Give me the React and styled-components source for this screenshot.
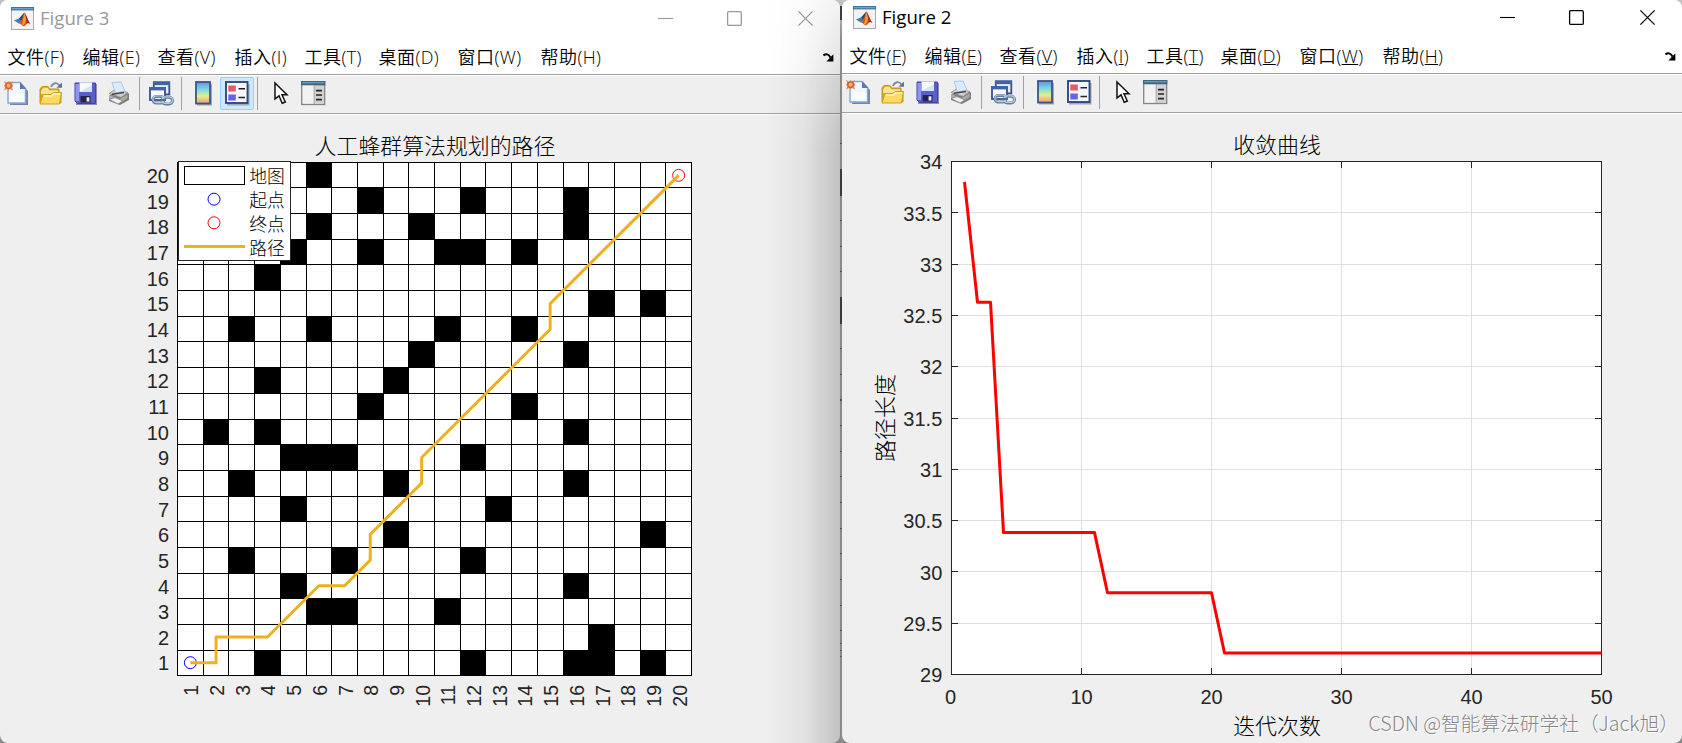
import styled, { createGlobalStyle, css } from "styled-components"

const menus = [
    ["文件", "F"],
    ["编辑", "E"],
    ["查看", "V"],
    ["插入", "I"],
    ["工具", "T"],
    ["桌面", "D"],
    ["窗口", "W"],
    ["帮助", "H"],
]

// obstacle columns for every row of the map
const obstacles = {
    20: [6],
    19: [8, 12, 16],
    18: [6, 10, 16],
    17: [5, 8, 11, 12, 14],
    16: [4],
    15: [17, 19],
    14: [3, 6, 11, 14],
    13: [10, 16],
    12: [4, 9],
    11: [8, 14],
    10: [2, 4, 16],
    9: [5, 6, 7, 12],
    8: [3, 9, 16],
    7: [5, 13],
    6: [9, 19],
    5: [3, 7, 12],
    4: [5, 16],
    3: [6, 7, 11],
    2: [17],
    1: [4, 12, 16, 17, 19],
}

const route = [
    [1, 1], [2, 1], [2, 2], [4, 2], [6, 4], [7, 4], [8, 5],
    [8, 6], [10, 8], [10, 9], [15, 14], [15, 15], [20, 20],
]

const convergence = [
    [1, 33.8], [2, 32.628], [3, 32.628], [4, 30.383], [11, 30.383],
    [12, 29.797], [20, 29.797], [21, 29.21], [50, 29.21],
]

const MatlabIcon = () => (
    <svg width="23" height="23" viewBox="0 0 23 23">
        <rect x="0.5" y="0.5" width="22" height="22" fill="#f3f3f3" stroke="#a9a9a9" />
        <rect x="0" y="0" width="23" height="3.4" fill="#3f7398" />
        <rect x="1" y="1.2" width="21" height="1" fill="#7fb0cf" />
        <path d="M3 13.5 L8.3 11.2 L13.5 5.6 L11 14 L7.8 16.6 Z" fill="#3a7fb4" />
        <path d="M8.3 11.2 L13.5 5.6 L11.5 12.5 L9.5 13.5 Z" fill="#234f78" />
        <path d="M7.8 16.6 C10 15.5 11.5 10 13.5 5.4 C15.5 8 17 14 19.5 17 C17.5 15.6 16.5 15.8 14.8 18 C13.6 19.5 12 19.6 11.2 18.8 C10.3 17.8 9.6 16.8 7.8 16.6 Z" fill="#d8541c" />
        <path d="M13.5 5.4 C12.9 8 12.2 14 11 18.6 C13 19 14 16 15 13 C14.6 10 14.2 7 13.5 5.4 Z" fill="#f2a035" />
        <path d="M13.5 5.4 C15.5 8 17 14 19.5 17 C17.5 15.6 16.5 15.8 15.5 17 C15.6 13 14.7 8 13.5 5.4 Z" fill="#a82a17" />
    </svg>
)

const NewIcon = () => (
    <svg width="25" height="25" viewBox="0 0 25 25">
        <path d="M6 4 H18 L24 10 V24 H6 Z" fill="#7385ab" />
        <path d="M4 1.5 H16 L21.5 7.5 V22 H4 Z" fill="#f0f8ff" stroke="#86a6dc" strokeWidth="1.4" />
        <path d="M16 1 L22.3 8 H16 Z" fill="#5f78b4" />
        <path d="M6 12 H20 V21 H6 Z" fill="#fff" opacity="0.6" />
        <path d="M0 0 L3 1.5 L4.5 0 L6 1.5 L9 0 L8 3 L9.5 4.7 L8 6.2 L9 9.5 L6 8 L4.5 9.5 L3 8 L0 9.5 L1.2 6.2 L0 4.7 L1.2 3 Z" fill="#e08a66" />
        <circle cx="4.6" cy="4.7" r="2.7" fill="#f4b25c" stroke="#cf5433" strokeWidth="1.2" />
    </svg>
)

const OpenIcon = () => (
    <svg width="24" height="25" viewBox="0 0 24 25">
        <path d="M12 6 C14 1.5 18 1 20.5 4.5" fill="none" stroke="#7a8fa5" strokeWidth="1.8" />
        <path d="M17.5 6.8 H23 V1.5 Z" fill="#5d7590" />
        <path d="M1 22 V8 L3 5.5 H9 L11 8 H20 V12 H22 V22 Z" fill="#d7a520" stroke="#c2951c" />
        <path d="M2 10 L4 6.8 H8.5 L10.5 9.2 H19 V13 H2 Z" fill="#fbe58a" />
        <path d="M1 23 L4 13.5 H12 L14 11.5 H22.5 L20.5 23 Z" fill="#fbdc60" stroke="#cda024" />
        <path d="M5 15 H12.5 L14.5 13 H21" fill="none" stroke="#fff6c4" strokeWidth="1.4" />
    </svg>
)

const SaveIcon = () => (
    <svg width="24" height="25" viewBox="0 0 24 25">
        <rect x="2" y="3" width="21" height="21" fill="#8f8fb5" />
        <path d="M1 2 H21.5 V22.5 H3.5 L1 20 Z" fill="#5a5fc8" stroke="#4144a6" />
        <path d="M1.5 3 H5 V20 H1.5 Z" fill="#8f95ea" />
        <rect x="5.5" y="1.5" width="12.5" height="9.5" fill="#f4faff" />
        <path d="M5.5 11 L18 4 V11 Z" fill="#d3e3f6" />
        <rect x="6.5" y="15" width="10" height="6.5" fill="#222748" />
        <rect x="12.6" y="16.3" width="2.8" height="4.2" fill="#eef" />
    </svg>
)

const PrintIcon = () => (
    <svg width="24" height="25" viewBox="0 0 24 25">
        <path d="M3 14 L10 9.5 L22 12.5 V19 L13 24 L2 20 Z" fill="#7c7c7c" />
        <path d="M2 12.5 L8 8.5 L21 11.5 L14 16.5 Z" fill="#cdcdcd" stroke="#8a8a8a" strokeWidth="0.8" />
        <path d="M5 1.5 L14 1 L18 10 L8.5 12 Z" fill="#d9ecff" stroke="#a7c1e0" strokeWidth="0.9" />
        <path d="M5 13.3 L17 11.5" stroke="#484848" strokeWidth="1.5" />
        <path d="M2 14 L13 18 L20.5 13.5 V17 L13 22 L2 18 Z" fill="#adadad" />
        <path d="M2 18.5 L8 16.5 L16 20 L11 23 Z" fill="#eee" stroke="#808080" strokeWidth="0.8" />
        <circle cx="18.5" cy="16.5" r="1" fill="#8ec26f" />
    </svg>
)

const LinkIcon = () => (
    <svg width="25" height="25" viewBox="0 0 25 25">
        <rect x="4.8" y="1.4" width="15.5" height="12" fill="#e7edf6" stroke="#345287" strokeWidth="1.8" />
        <rect x="4" y="0.5" width="17" height="3.6" fill="#3f65a4" />
        <rect x="1" y="7" width="15" height="12" fill="#f5f8fc" stroke="#345287" strokeWidth="1.8" />
        <rect x="0.2" y="6" width="16.6" height="3.4" fill="#3f65a4" />
        <rect x="4" y="15.5" width="11" height="6.6" rx="3.3" fill="none" stroke="#637e9e" strokeWidth="3" />
        <rect x="13" y="16.3" width="10.5" height="6.6" rx="3.3" fill="none" stroke="#637e9e" strokeWidth="3" />
        <rect x="4" y="15" width="11" height="6.6" rx="3.3" fill="none" stroke="#b9cce0" strokeWidth="1.2" />
        <rect x="13" y="15.8" width="10.5" height="6.6" rx="3.3" fill="none" stroke="#b9cce0" strokeWidth="1.2" />
        <path d="M10.5 19 H17" stroke="#526d8e" strokeWidth="2" />
    </svg>
)

const ColorbarIcon = () => (
    <svg width="18" height="25" viewBox="0 0 18 25">
        <defs>
            <linearGradient id="bar" x1="0" y1="0" x2="0" y2="1">
                <stop offset="0" stopColor="#6f8fe0" />
                <stop offset="0.35" stopColor="#75dbe0" />
                <stop offset="0.65" stopColor="#e6ec8c" />
                <stop offset="1" stopColor="#ef9c78" />
            </linearGradient>
        </defs>
        <rect x="2" y="3" width="15" height="21.5" fill="#a1a8b5" />
        <rect x="1" y="1" width="14" height="21.5" fill="url(#bar)" stroke="#3d5585" strokeWidth="1.8" />
    </svg>
)

const LegendIcon = () => (
    <svg width="25" height="25" viewBox="0 0 25 25">
        <rect x="2" y="3" width="22.5" height="21.5" fill="#a1a8b5" />
        <rect x="1" y="1" width="21.5" height="21" fill="#f5f7fd" stroke="#32497f" strokeWidth="1.9" />
        <rect x="3.3" y="4.5" width="7.5" height="6" fill="#e65c5c" />
        <rect x="3.3" y="13.5" width="7.5" height="6" fill="#6464e6" />
        <path d="M13.5 7.7 H20 M13.5 16.4 H20" stroke="#222" strokeWidth="1.5" />
    </svg>
)

const PointerIcon = () => (
    <svg width="17" height="25" viewBox="0 0 17 25">
        <path d="M2 2 V18 L6 14.8 L9.2 22.3 L12.3 21 L9 13.8 H14 Z" fill="#fff" stroke="#111" strokeWidth="1.5" />
    </svg>
)

const InspectorIcon = () => (
    <svg width="25" height="25" viewBox="0 0 25 25">
        <rect x="0.7" y="0.7" width="23" height="22.8" fill="#f2f2f2" stroke="#858585" strokeWidth="1.3" />
        <rect x="14" y="4" width="9" height="19" fill="#d1d1d1" />
        <rect x="0" y="0" width="24.3" height="4.3" fill="#3e6681" />
        <rect x="1.2" y="1.2" width="22" height="1.1" fill="#78a9c8" />
        <path d="M13.2 4 V23" stroke="#999" />
        <path d="M15 9.6 H21 M15 14 H21 M15 18.6 H21" stroke="#252525" strokeWidth="1.6" />
    </svg>
)

const WindowButtons = () => (
    <svg width="157" height="17" viewBox="0 0 157 17" fill="none" stroke="currentColor">
        <path d="M0 8.5 H15" strokeWidth="1.1" />
        <rect x="69.6" y="1.7" width="13.7" height="13.7" rx="1.2" strokeWidth="1.3" />
        <path d="M140.4 1.4 L154.6 15.6 M154.6 1.4 L140.4 15.6" strokeWidth="1.2" />
    </svg>
)

const DockArrow = () => (
    <svg width="11" height="9" viewBox="0 0 11 9">
        <path d="M0.5 2.5 C3 0.3 5.5 1 7.5 4.5" fill="none" stroke="#000" strokeWidth="2" />
        <path d="M10.4 1.2 V8.4 H3.4 Z" fill="#000" />
    </svg>
)

const FigureWindow = ({ title, active, legendOn, children }) => (
    <Window>
        <TitleBar $active={active}>
            <MatlabIcon />
            <Title>{title}</Title>
            <WindowButtons />
        </TitleBar>
        <MenuBar>
            {menus.map(([label, key]) => (
                <MenuItem key={key}>
                    {label}(<MenuKey $underlined={active}>{key}</MenuKey>)
                </MenuItem>
            ))}
            <DockArrow />
        </MenuBar>
        <Toolbar>
            <Tool $width={34}><NewIcon /></Tool>
            <Tool $width={35}><OpenIcon /></Tool>
            <Tool $width={33}><SaveIcon /></Tool>
            <Tool $width={32}><PrintIcon /></Tool>
            <Separator />
            <Tool $width={41} $indent={9}><LinkIcon /></Tool>
            <Separator />
            <Tool $width={38} $indent={13}><ColorbarIcon /></Tool>
            <ToggleTool $on={legendOn}><LegendIcon /></ToggleTool>
            <Separator $first />
            <Tool $width={43} $indent={15}><PointerIcon /></Tool>
            <Tool $width={25}><InspectorIcon /></Tool>
        </Toolbar>
        {children}
    </Window>
)

const PathFigure = () => {
    const left = 177.5
    const top = 162.5
    const bottom = 675.5
    const rowOffset = (n) => Math.max(0, Math.round(n * 25.65 - 0.2))
    const gridX = (n) => left + Math.round(n * 25.7)
    const gridY = (n) => (n > 10 ? top + rowOffset(20 - n) : bottom - rowOffset(n))
    const cx = (n) => left + (n - 0.5) * 25.7
    const cy = (n) => bottom - (n - 0.5) * 25.65
    const numbers = Array.from({ length: 20 }, (_, i) => i + 1)
    const lines = [0, ...numbers]

    return (
        <Chart viewBox="0 115 840 628">
            <ChartTitle x="435" y="154">人工蜂群算法规划的路径</ChartTitle>
            <rect x={left} y={top} width="514" height="513" fill="#fff" />
            {Object.entries(obstacles).map(([row, cols]) =>
                cols.map((col) => (
                    <rect
                        key={`${row}-${col}`}
                        x={gridX(col - 1)}
                        y={gridY(+row)}
                        width={gridX(col) - gridX(col - 1)}
                        height={gridY(row - 1) - gridY(+row)}
                    />
                ))
            )}
            {lines.map((n) => (
                <path
                    key={n}
                    d={`M${gridX(n)} 162 V676 M177 ${gridY(n)} H692`}
                    stroke="#000"
                />
            ))}
            {numbers.map((n) => (
                <g key={n}>
                    <TickLabel x="169" y={cy(n) + 7.8} $anchor="end">{n}</TickLabel>
                    <TickLabel
                        $size={19.5}
                        $anchor="end"
                        transform={`translate(${cx(n) + 8} 685) rotate(-90)`}
                    >
                        {n}
                    </TickLabel>
                </g>
            ))}
            <circle cx={cx(1)} cy={cy(1)} r="6" fill="none" stroke="#00f" />
            <circle cx={cx(20)} cy={cy(20)} r="6" fill="none" stroke="#f00" />
            <polyline
                points={route.map(([x, y]) => `${cx(x)},${cy(y)}`).join(" ")}
                fill="none"
                stroke="#edb120"
                strokeWidth="3"
                strokeLinejoin="round"
            />
            <rect x="178.5" y="161.5" width="112" height="99" fill="#fff" stroke="#262626" />
            <rect x="184.5" y="166.5" width="60" height="18" fill="#fff" stroke="#000" />
            <circle cx="214" cy="199.2" r="6" fill="none" stroke="#00f" />
            <circle cx="214" cy="222.8" r="6" fill="none" stroke="#f00" />
            <path d="M184 246.5 H245" stroke="#edb120" strokeWidth="3" />
            <LegendLabel x="249.3" y="183.4">地图</LegendLabel>
            <LegendLabel x="249.3" y="207.4">起点</LegendLabel>
            <LegendLabel x="249.3" y="231.4">终点</LegendLabel>
            <LegendLabel x="249.3" y="255.4">路径</LegendLabel>
        </Chart>
    )
}

const ConvergenceFigure = () => {
    const px = (v) => 109.5 + v * 13
    const py = (v) => 674.5 - (v - 29) * 102.6
    const snap = (v) => Math.floor(v) + 0.5
    const xTicks = [0, 10, 20, 30, 40, 50]
    const yTicks = [29, 29.5, 30, 30.5, 31, 31.5, 32, 32.5, 33, 33.5, 34]

    return (
        <Chart viewBox="0 114 840 629">
            <ChartTitle x="435" y="153">收敛曲线</ChartTitle>
            <rect x="109.5" y="161.5" width="650" height="513" fill="#fff" />
            {xTicks.map((v) => (
                <g key={v}>
                    <path d={`M${px(v)} 162 V674`} stroke="#dfdfdf" />
                    <path d={`M${px(v)} 675 v-7 M${px(v)} 161 v7`} stroke="#262626" />
                    <TickLabel x={v ? px(v) : 108.5} y="703.7">{v}</TickLabel>
                </g>
            ))}
            {yTicks.map((v) => (
                <g key={v}>
                    <path d={`M110 ${snap(py(v))} H759`} stroke="#dfdfdf" />
                    <path d={`M109 ${snap(py(v))} h7 M760 ${snap(py(v))} h-7`} stroke="#262626" />
                    <TickLabel x="100.3" y={py(v) + 7.7} $anchor="end">{v}</TickLabel>
                </g>
            ))}
            <rect x="109.5" y="161.5" width="650" height="513" fill="none" stroke="#262626" />
            <polyline
                points={convergence.map(([x, y]) => `${px(x)},${py(y)}`).join(" ")}
                fill="none"
                stroke="#f00"
                strokeWidth="3"
                strokeLinejoin="round"
            />
            <ChartTitle x="435" y="734">迭代次数</ChartTitle>
            <ChartTitle transform="translate(51 418) rotate(-90)">路径长度</ChartTitle>
        </Chart>
    )
}

export default function App() {
    return (
        <>
            <GlobalStyle />
            <Desktop>
                <FigureWindow title="Figure 3" legendOn>
                    <PathFigure />
                    <EdgeShade />
                </FigureWindow>
                <WindowGap />
                <FigureWindow title="Figure 2" active>
                    <ConvergenceFigure />
                </FigureWindow>
                <Watermark>CSDN @智能算法研学社（Jack旭）</Watermark>
            </Desktop>
        </>
    )
}

const GlobalStyle = createGlobalStyle`
    body {
        margin: 0;
        overflow: hidden;
    }
    * {
        box-sizing: border-box;
    }
`

const Desktop = styled.main`
    position: relative;
    display: flex;
    width: 1682px;
    height: 743px;
    background: linear-gradient(#c4c4c4, #8a8a8a 40px);
    font-family: "Open Sans", "Noto Sans CJK SC", sans-serif;
`

const Window = styled.section`
    position: relative;
    display: flex;
    flex-direction: column;
    width: 840px;
    height: 743px;
    border-radius: 8px;
    overflow: hidden;
    background-color: #efefef;
`

// sliver of the window behind, its axis ticks show through
const WindowGap = styled.div`
    width: 2px;
    height: 743px;
    flex-shrink: 0;
    background:
        linear-gradient(#3c3c44, #3c3c44) 0 6px / 2px 14px no-repeat,
        linear-gradient(#3a3a3a, #3a3a3a) 0 169px / 2px 27px no-repeat,
        linear-gradient(#3a3a3a, #3a3a3a) 0 297px / 2px 27px no-repeat,
        repeating-linear-gradient(#4f4f4f 0 1px, transparent 1px 25.65px) 0 143px / 2px 490px no-repeat,
        repeating-linear-gradient(#5a5a5a 0 1px, transparent 1px 6.5px) 0 643px / 2px 14px no-repeat;
`

const TitleBar = styled.header`
    display: flex;
    align-items: center;
    gap: 6px;
    height: ${({ $active }) => ($active ? 33 : 34)}px;
    padding: ${({ $active }) => ($active ? 2 : 3)}px 25px 0 11px;
    background-color: #fff;
    color: ${({ $active }) => ($active ? "#000" : "#999")};
    flex-shrink: 0;
`

const Title = styled.h1`
    flex: 1;
    margin: 0;
    padding-bottom: 2px;
    font-size: 18.6px;
    font-weight: 400;
    line-height: 21px;
`

const MenuBar = styled.nav`
    display: grid;
    grid-template-columns: 75px 75px 77px 70px 74px 79px 83px 1fr 11px;
    align-items: center;
    height: 40px;
    padding: 7px 6px 0 7.6px;
    background-color: #fff;
    flex-shrink: 0;
`

const MenuItem = styled.span`
    padding-bottom: 1px;
    font-size: 18px;
    font-weight: 350;
    line-height: 26px;
    letter-spacing: 0.4px;
    white-space: nowrap;
    color: #000;
`

const MenuKey = styled.span`
    ${({ $underlined }) => $underlined && css`
        text-decoration: underline;
        text-decoration-thickness: 1px;
        text-underline-offset: 1px;
    `}
`

const Toolbar = styled.div`
    display: flex;
    align-items: center;
    height: 41px;
    padding: 0 0 2px 4px;
    border-top: 1px solid #a0a0a0;
    border-bottom: 1px solid #fff;
    box-shadow: inset 0 1px #fff, inset 0 -1px #a0a0a0;
    flex-shrink: 0;
`

const Tool = styled.span`
    display: flex;
    width: ${({ $width }) => $width}px;
    padding-left: ${({ $indent }) => $indent || 0}px;
    flex-shrink: 0;

    &:first-child {
        width: 35px;
    }
`

const ToggleTool = styled.span`
    display: flex;
    align-items: center;
    justify-content: center;
    width: 34px;
    height: 33px;
    border: 1px solid ${({ $on }) => ($on ? "#99d1ff" : "transparent")};
    border-radius: 2px;
    background-color: ${({ $on }) => ($on ? "#cce8ff" : "transparent")};
`

const Separator = styled.span`
    width: 1px;
    height: 33px;
    margin-left: ${({ $first }) => ($first ? 3 : 0)}px;
    background-color: #a0a0a0;
`

const Chart = styled.svg`
    display: block;
    width: 840px;
    flex: 1;
    min-height: 0;
`

const TickLabel = styled.text`
    font-family: "Liberation Sans", sans-serif;
    font-size: ${({ $size }) => $size || 20}px;
    fill: #262626;
    text-anchor: ${({ $anchor }) => $anchor || "middle"};
`

const ChartTitle = styled.text`
    font-family: "Noto Sans CJK SC", sans-serif;
    font-size: 21.9px;
    font-weight: 300;
    fill: #000;
    text-anchor: middle;
`

const LegendLabel = styled.text`
    font-family: "Noto Sans CJK SC", sans-serif;
    font-size: 17.8px;
    font-weight: 300;
    fill: #000;
`

const EdgeShade = styled.div`
    position: absolute;
    top: 0;
    right: 0;
    width: 74px;
    height: 743px;
    background: linear-gradient(to right, rgba(0, 0, 0, 0), rgba(0, 0, 0, 0.05) 50%, rgba(0, 0, 0, 0.19));
    mask-image: linear-gradient(to bottom, rgba(0, 0, 0, 0.25), #000 150px);
    pointer-events: none;
`

const Watermark = styled.div`
    position: absolute;
    right: 3px;
    bottom: 7px;
    font-family: "Noto Sans CJK SC", sans-serif;
    font-size: 19.7px;
    font-weight: 300;
    line-height: 26px;
    color: #868686;
    text-shadow: 1px 1px 0 #fff;
    white-space: nowrap;
`
